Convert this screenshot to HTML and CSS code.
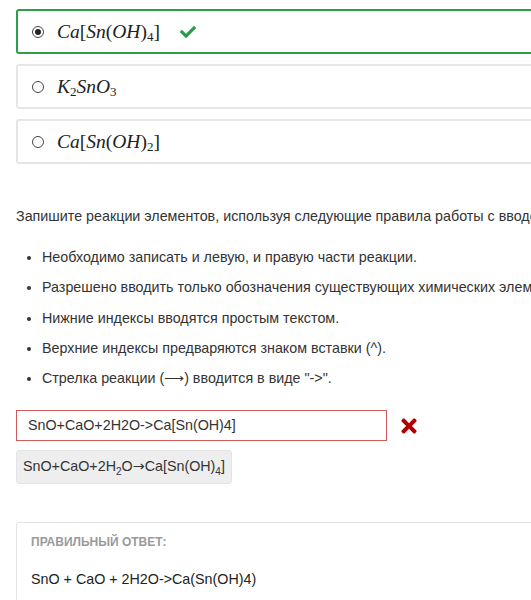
FILE: index.html
```html
<!DOCTYPE html>
<html lang="ru">
<head>
<meta charset="utf-8">
<link rel="stylesheet" href="styles.css">
</head>
<body>
<div class="page">
  <div class="options">
    <div class="option selected">
      <span class="radio checked"></span>
      <span class="math"><i>Ca</i>[<i>Sn</i>(<i>OH</i>)<sub>4</sub>]</span>
      <svg class="check" viewBox="0 0 512 512" width="16" height="16"><path d="M173.9 439.4L7.5 273c-10-10-10-26.2 0-36.2l36.2-36.2c10-10 26.2-10 36.2 0L192 312.7 432.1 72.6c10-10 26.2-10 36.2 0l36.2 36.2c10 10 10 26.2 0 36.2L210.1 439.4c-10 10-26.2 10-36.2 0z" fill="#2a9d4b"/></svg>
    </div>
    <div class="option">
      <span class="radio"></span>
      <span class="math"><i>K</i><sub>2</sub><i>SnO</i><sub>3</sub></span>
    </div>
    <div class="option">
      <span class="radio"></span>
      <span class="math"><i>Ca</i>[<i>Sn</i>(<i>OH</i>)<sub>2</sub>]</span>
    </div>
  </div>

  <p class="intro">Запишите реакции элементов, используя следующие правила работы с вводом химических уравнений:</p>
  <ul class="rules">
    <li>Необходимо записать и левую, и правую части реакции.</li>
    <li>Разрешено вводить только обозначения существующих химических элементов.</li>
    <li>Нижние индексы вводятся простым текстом.</li>
    <li>Верхние индексы предваряются знаком вставки (^).</li>
    <li>Стрелка реакции (⟶) вводится в виде "-&gt;".</li>
  </ul>

  <div class="answer-row">
    <div class="input">SnO+CaO+2H2O-&gt;Ca[Sn(OH)4]</div>
    <svg class="cross" viewBox="0 0 352 512" width="18" height="22"><path d="M242.7 256l100.1-100.1c12.3-12.3 12.3-32.2 0-44.5l-22.2-22.2c-12.3-12.3-32.2-12.3-44.5 0L176 189.3 75.9 89.2c-12.3-12.3-32.2-12.3-44.5 0L9.2 111.4c-12.3 12.3-12.3 32.2 0 44.5L109.3 256 9.2 356.1c-12.3 12.3-12.3 32.2 0 44.5l22.2 22.2c12.3 12.3 32.2 12.3 44.5 0L176 322.7l100.1 100.1c12.3 12.3 32.2 12.3 44.5 0l22.2-22.2c12.3-12.3 12.3-32.2 0-44.5L242.7 256z" fill="#b20000"/></svg>
  </div>
  <div class="preview">SnO+CaO+2H<sub>2</sub>O<span class="arrow">→</span>Ca[Sn(OH)<sub>4</sub>]</div>

  <div class="correct">
    <div class="correct-label">Правильный ответ:</div>
    <div class="correct-text">SnO + CaO + 2H2O-&gt;Ca(Sn(OH)4)</div>
  </div>
</div>
</body>
</html>
```

FILE: styles.css
```css
html, body {
  margin: 0;
  padding: 0;
  overflow: hidden;
  background: #fff;
}
body {
  font-family: "Liberation Sans", Arial, sans-serif;
  font-size: 14.3px;
  color: #333;
}
.page {
  width: 820px;
  padding: 9px 0 0 16px;
}
.options {
  display: flex;
  flex-direction: column;
  gap: 10px;
}
.option {
  height: 45px;
  box-sizing: border-box;
  border: 2px solid #e6e6e6;
  border-radius: 3px;
  display: flex;
  align-items: center;
  padding-left: 14px;
}
.option.selected {
  border-color: #2c9f4d;
}
.radio {
  width: 12px;
  height: 12px;
  box-sizing: border-box;
  border: 1.5px solid #444;
  border-radius: 50%;
  margin-right: 13px;
  display: flex;
  align-items: center;
  justify-content: center;
}
.radio.checked::after {
  content: "";
  width: 6px;
  height: 6px;
  border-radius: 50%;
  background: #222;
}
.math {
  font-family: "Liberation Serif", "Times New Roman", serif;
  font-size: 19.5px;
  color: #222;
}
.math i {
  font-style: italic;
}
.math sub {
  font-size: 13px;
  vertical-align: -3px;
  line-height: 0;
}
.check {
  margin-left: 20px;
}
.intro {
  margin: 42px 0 0;
  line-height: 20px;
  white-space: nowrap;
}
.rules {
  margin: 21px 0 0;
  padding-left: 26px;
}
.rules li {
  line-height: 20px;
  margin-bottom: 10.3px;
  white-space: nowrap;
}
.answer-row {
  display: flex;
  align-items: center;
  margin-top: 22px;
}
.input {
  width: 371px;
  height: 31px;
  box-sizing: border-box;
  border: 1px solid #cf5a5a;
  padding: 0 11px;
  line-height: 29px;
  color: #333;
}
.cross {
  margin-left: 13px;
}
.preview {
  display: inline-block;
  margin-top: 9px;
  background: #eee;
  border: 1px solid #e4e4e4;
  border-radius: 3px;
  padding: 6px 6px 7px;
  line-height: 19px;
  color: #333;
}
.preview .arrow {
  font-family: "DejaVu Sans", sans-serif;
  font-size: 14.3px;
}
.preview sub {
  font-size: 10px;
  line-height: 0;
}
.correct {
  margin-top: 38px;
  border: 1px solid #e2e2e2;
  border-radius: 3px;
  padding: 12px 14px;
}
.correct-label {
  font-size: 12px;
  font-weight: bold;
  text-transform: uppercase;
  color: #9a9a9a;
  line-height: 14px;
}
.correct-text {
  margin-top: 20px;
  line-height: 20px;
  color: #222;
}
```
